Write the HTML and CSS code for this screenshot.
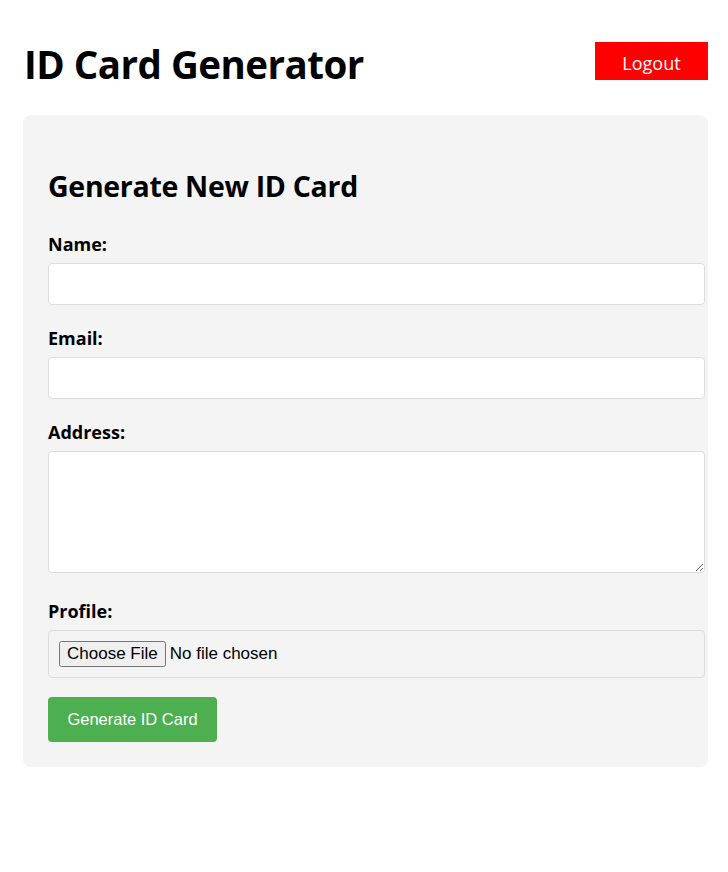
FILE: index.html
```html
<!DOCTYPE html>
<html>
<head>
<meta charset="utf-8">
<title>ID Card Generator</title>
<link rel="stylesheet" href="styles.css">
</head>
<body>
<div class="page">
  <header class="topbar">
    <h1 class="title">ID Card Generator</h1>
    <button class="logout" type="button">Logout</button>
  </header>
  <section class="card">
    <h2 class="card-title">Generate New ID Card</h2>
    <form class="form">
      <label class="label" for="name">Name:</label>
      <input class="field" id="name" type="text">
      <label class="label" for="email">Email:</label>
      <input class="field" id="email" type="email">
      <label class="label" for="address">Address:</label>
      <textarea class="field area" id="address"></textarea>
      <label class="label" for="profile">Profile:</label>
      <input class="field file" id="profile" type="file">
      <button class="submit" type="button">Generate ID Card</button>
    </form>
  </section>
</div>
</body>
</html>
```
FILE: styles.css
```css
html, body {
  margin: 0;
  padding: 0;
  background: #fff;
}
body {
  font-family: "Open Sans", "Noto Sans", sans-serif;
  color: #000;
}
.page {
  padding: 0 20px 0 23px;
}
.topbar {
  display: flex;
  justify-content: space-between;
  align-items: center;
  padding-top: 40px;
  height: 48px;
  margin-bottom: 27px;
}
.title {
  margin: 0 0 0 1px;
  font-size: 38.5px;
  font-weight: 700;
  line-height: 48px;
  letter-spacing: -0.5px;
}
.logout {
  background: #ff0000;
  color: #fff;
  border: none;
  font-family: "Open Sans", sans-serif;
  font-size: 18px;
  width: 113px;
  height: 38px;
  margin-top: -6px;
  padding: 3px 0 0;
}
.card {
  background: #f4f4f4;
  border-radius: 8px;
  padding: 25px;
}
.card-title {
  margin: 26px 0 26px;
  font-size: 28.5px;
  line-height: 40px;
  font-weight: 700;
  letter-spacing: -0.3px;
}
.form {
  display: flex;
  flex-direction: column;
  align-items: flex-start;
}
.label {
  font-weight: 700;
  font-size: 18px;
  line-height: 24px;
  margin-bottom: 7px;
}
.field {
  box-sizing: content-box;
  width: 100%;
  padding: 10px;
  border: 1px solid #ddd;
  border-radius: 4px;
  background: #fff;
  font-size: 16px;
  height: 20px;
  margin: 0 0 21px;
}
.area {
  height: 100px;
  resize: vertical;
  margin-bottom: 26px;
  font-family: "Liberation Mono", monospace;
}
.file {
  background: transparent;
  height: 26px;
  font-family: "Liberation Sans", Arial, sans-serif;
  font-size: 17px;
  margin-bottom: 19px;
}
.submit {
  background: #4caf50;
  color: #fff;
  border: none;
  border-radius: 4px;
  font-family: "Liberation Sans", Arial, sans-serif;
  font-size: 16.5px;
  width: 169px;
  height: 45px;
  padding: 0;
}
```
